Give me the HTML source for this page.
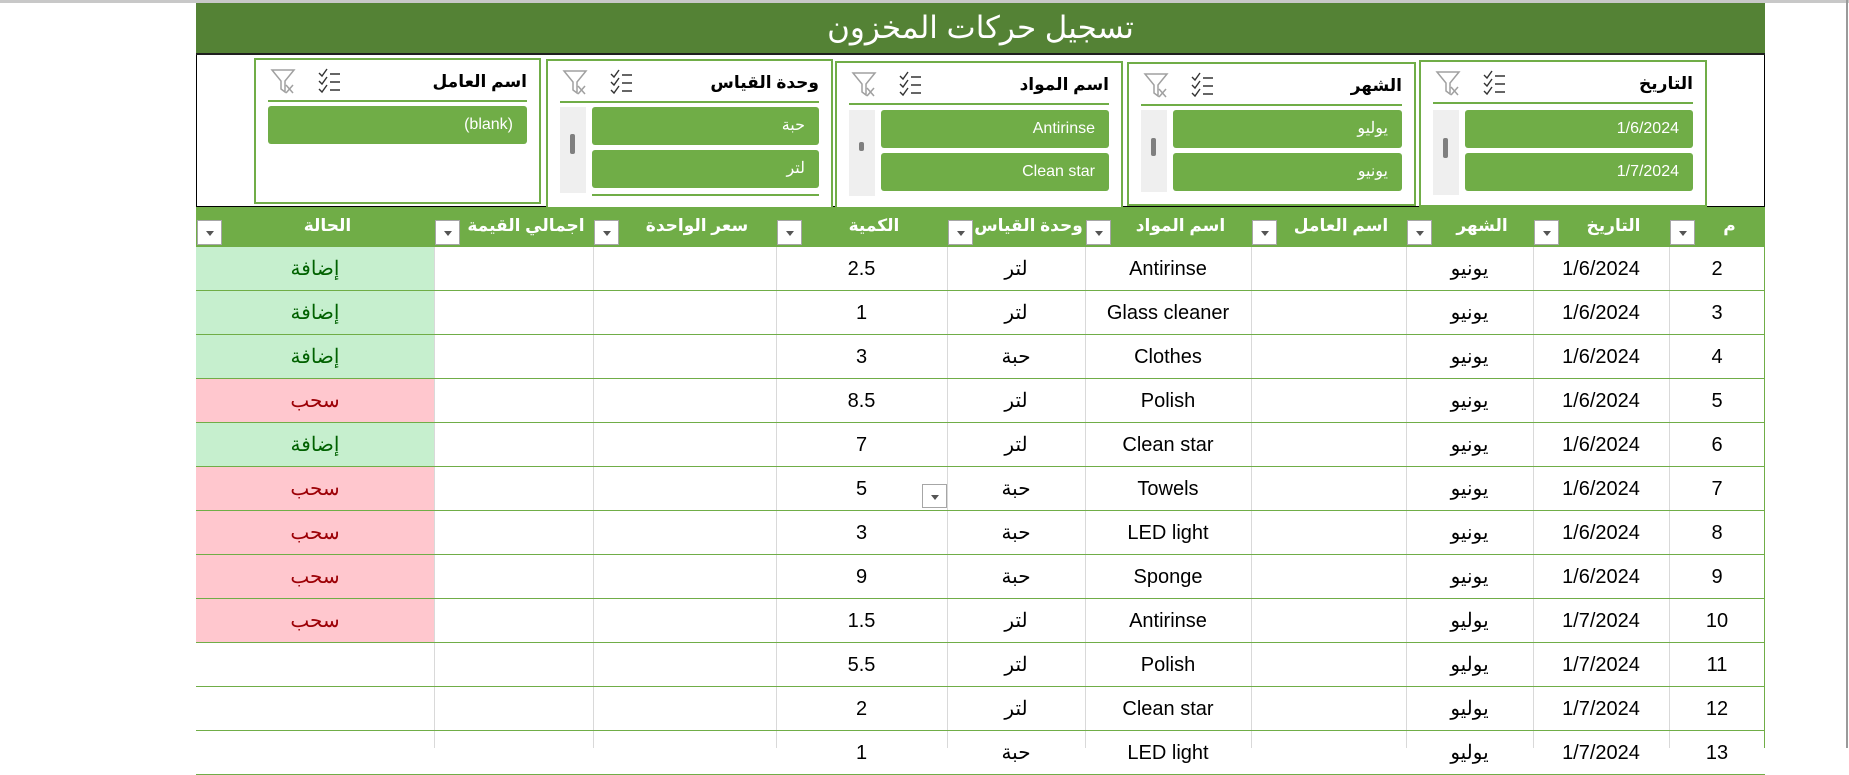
<!DOCTYPE html>
<html><head><meta charset="utf-8"><style>
*{margin:0;padding:0;box-sizing:border-box}
body{width:1849px;height:748px;background:#fff;position:relative;overflow:hidden;font-family:"Liberation Sans Narrow","Liberation Sans","Noto Sans CJK SC",sans-serif}
.a{position:absolute}
.title{left:196px;top:3px;width:1569px;height:52px;background:#548235;border-bottom:2px solid #1f1f1f;color:#fff;font-size:31px;text-align:center;line-height:50px;font-family:"Liberation Sans","DejaVu Sans",sans-serif}
.slarea{left:196px;top:55px;width:1569px;height:153px;border-left:1px solid #000;border-right:1px solid #000;border-bottom:2px solid #000}
.sl{border:2px solid #70ad47;background:#fff}
.sl .h{position:absolute;right:12px;top:12px;font-weight:bold;font-size:17px;font-family:"Liberation Sans","DejaVu Sans",sans-serif}
.sl .ln{position:absolute;left:12px;right:12px;top:40px;height:2px;background:#70ad47}
.it{position:absolute;background:#70ad47;border-radius:3px;color:#fff;font-size:16px;text-align:right;padding-right:14px;line-height:38px;height:38px}
.sb{position:absolute;background:#efefef;width:26px}
.sb i{position:absolute;left:10px;width:5px;background:#7f7f7f;border-radius:2px}
.ic{position:absolute;top:8px}
.hdr{left:196px;top:207px;width:1569px;height:40px;background:#70ad47}
.hc{position:absolute;top:207px;height:40px;color:#fff;font-weight:bold;font-size:17px;line-height:38px;text-align:center;font-family:"Liberation Sans","DejaVu Sans",sans-serif}
.dd{position:absolute;top:220px;width:25px;height:25px;background:#fff;border:1px solid #a6a6a6}
.dd:after,.dv:after{content:"";position:absolute;left:8px;top:10px;border-left:4px solid transparent;border-right:4px solid transparent;border-top:5px solid #555}
.cell{position:absolute;height:44px;line-height:44px;text-align:center;font-size:20px;color:#000}
.hl{position:absolute;left:196px;width:1569px;height:2px;background:#70ad47}
.vl{position:absolute;top:247px;height:501px;width:1px;background:#d9d9d9}
.add{background:#c6efce;color:#006100}
.rem{background:#ffc7ce;color:#9c0006}
</style></head><body>
<div class="a" style="left:0;top:0;width:1849px;height:3px;background:#c8c8c8"></div>
<div class="a" style="left:1846px;top:0;width:2px;height:748px;background:#9a9a9a"></div>
<div class="a title">تسجيل حركات المخزون</div>
<div class="a slarea"></div>

<!-- slicers -->
<svg width="0" height="0" style="position:absolute"><defs>
<g id="fx"><path d="M2 2H24L15 13V24L11 21V13Z" fill="none" stroke="#a0a0a0" stroke-width="1.5"/><path d="M16 17L23 25M23 17L16 25" stroke="#a0a0a0" stroke-width="1.5"/></g>
<g id="ck"><path d="M1 5L4 8L9 1M1 13L4 16L9 9M1 21L4 24L9 17" fill="none" stroke="#333" stroke-width="1.4"/><path d="M12 6H22M12 14H22M12 22H22" stroke="#333" stroke-width="1.6"/></g>
</defs></svg>

<div class="a sl" style="left:254px;top:58px;width:287px;height:146px">
<svg class="ic" style="left:14px" width="26" height="28"><use href="#fx"/></svg>
<svg class="ic" style="left:62px" width="24" height="28"><use href="#ck"/></svg>
<div class="h">اسم العامل</div><div class="ln"></div>
<div class="it" style="left:12px;right:12px;top:46px">(blank)</div>
</div>

<div class="a sl" style="left:546px;top:59px;width:287px;height:150px">
<svg class="ic" style="left:14px" width="26" height="28"><use href="#fx"/></svg>
<svg class="ic" style="left:62px" width="24" height="28"><use href="#ck"/></svg>
<div class="h">وحدة القياس</div><div class="ln"></div>
<div class="sb" style="left:12px;top:46px;height:86px"><i style="top:27px;height:20px"></i></div>
<div class="it" style="left:44px;right:12px;top:46px">حبة</div>
<div class="it" style="left:44px;right:12px;top:89px">لتر</div>
<div class="a" style="left:44px;right:12px;top:133px;height:2px;background:#70ad47"></div>
</div>

<div class="a sl" style="left:835px;top:61px;width:288px;height:148px">
<svg class="ic" style="left:14px" width="26" height="28"><use href="#fx"/></svg>
<svg class="ic" style="left:62px" width="24" height="28"><use href="#ck"/></svg>
<div class="h">اسم المواد</div><div class="ln"></div>
<div class="sb" style="left:12px;top:47px;height:86px"><i style="top:32px;height:9px"></i></div>
<div class="it" style="left:44px;right:12px;top:47px">Antirinse</div>
<div class="it" style="left:44px;right:12px;top:90px">Clean star</div>
</div>

<div class="a sl" style="left:1127px;top:62px;width:289px;height:144px">
<svg class="ic" style="left:14px" width="26" height="28"><use href="#fx"/></svg>
<svg class="ic" style="left:62px" width="24" height="28"><use href="#ck"/></svg>
<div class="h">الشهر</div><div class="ln"></div>
<div class="sb" style="left:12px;top:46px;height:82px"><i style="top:28px;height:18px"></i></div>
<div class="it" style="left:44px;right:12px;top:46px">يوليو</div>
<div class="it" style="left:44px;right:12px;top:89px">يونيو</div>
</div>

<div class="a sl" style="left:1419px;top:60px;width:288px;height:147px">
<svg class="ic" style="left:14px" width="26" height="28"><use href="#fx"/></svg>
<svg class="ic" style="left:62px" width="24" height="28"><use href="#ck"/></svg>
<div class="h">التاريخ</div><div class="ln"></div>
<div class="sb" style="left:12px;top:48px;height:85px"><i style="top:28px;height:20px"></i></div>
<div class="it" style="left:44px;right:12px;top:48px">1/6/2024</div>
<div class="it" style="left:44px;right:12px;top:91px">1/7/2024</div>
</div>

<!-- header -->
<div class="a hdr"></div>
<div class="hc" style="left:221px;width:213px">الحالة</div>
<div class="hc" style="left:459px;width:134px">اجمالي القيمة</div>
<div class="hc" style="left:618px;width:158px">سعر الواحدة</div>
<div class="hc" style="left:801px;width:146px">الكمية</div>
<div class="hc" style="left:972px;width:113px">وحدة القياس</div>
<div class="hc" style="left:1110px;width:141px">اسم المواد</div>
<div class="hc" style="left:1276px;width:130px">اسم العامل</div>
<div class="hc" style="left:1431px;width:102px">الشهر</div>
<div class="hc" style="left:1558px;width:111px">التاريخ</div>
<div class="hc" style="left:1694px;width:71px">م</div>
<div class="dd" style="left:197px"></div>
<div class="dd" style="left:435px"></div>
<div class="dd" style="left:594px"></div>
<div class="dd" style="left:777px"></div>
<div class="dd" style="left:948px"></div>
<div class="dd" style="left:1086px"></div>
<div class="dd" style="left:1252px"></div>
<div class="dd" style="left:1407px"></div>
<div class="dd" style="left:1534px"></div>
<div class="dd" style="left:1670px"></div>

<!-- vertical grid -->
<div class="vl" style="left:434px"></div><div class="vl" style="left:593px"></div><div class="vl" style="left:776px"></div>
<div class="vl" style="left:947px"></div><div class="vl" style="left:1085px"></div><div class="vl" style="left:1251px"></div>
<div class="vl" style="left:1406px"></div><div class="vl" style="left:1533px"></div><div class="vl" style="left:1669px"></div>
<div class="a" style="left:1764px;top:247px;width:1px;height:501px;background:#70ad47"></div>

<div id="rows"></div>
<script>
var d=[[2,"1/6/2024","يونيو","Antirinse","لتر","2.5",1],[3,"1/6/2024","يونيو","Glass cleaner","لتر","1",1],[4,"1/6/2024","يونيو","Clothes","حبة","3",1],[5,"1/6/2024","يونيو","Polish","لتر","8.5",2],[6,"1/6/2024","يونيو","Clean star","لتر","7",1],[7,"1/6/2024","يونيو","Towels","حبة","5",2],[8,"1/6/2024","يونيو","LED light","حبة","3",2],[9,"1/6/2024","يونيو","Sponge","حبة","9",2],[10,"1/7/2024","يوليو","Antirinse","لتر","1.5",2],[11,"1/7/2024","يوليو","Polish","لتر","5.5",0],[12,"1/7/2024","يوليو","Clean star","لتر","2",0],[13,"1/7/2024","يوليو","LED light","حبة","1",0]];
var h="";
d.forEach(function(r,i){var y=247+i*44;
function c(l,w,t,cls){h+='<div class="cell '+(cls||'')+'" style="left:'+l+'px;width:'+w+'px;top:'+y+'px">'+t+'</div>';}
if(r[6]==1)c(196,238,"إضافة","add");else if(r[6]==2)c(196,238,"سحب","rem");
c(776,171,r[5]);c(947,138,r[4]);c(1085,166,r[3]);c(1406,127,r[2]);c(1533,136,r[1]);c(1669,96,r[0]);
h+='<div class="hl" style="top:'+(y+43)+'px;height:1px"></div>';});
document.getElementById("rows").innerHTML=h;
</script>
<div class="dv a" style="left:922px;top:484px;width:25px;height:24px;background:#fff;border:1px solid #a6a6a6"></div>
</body></html>
